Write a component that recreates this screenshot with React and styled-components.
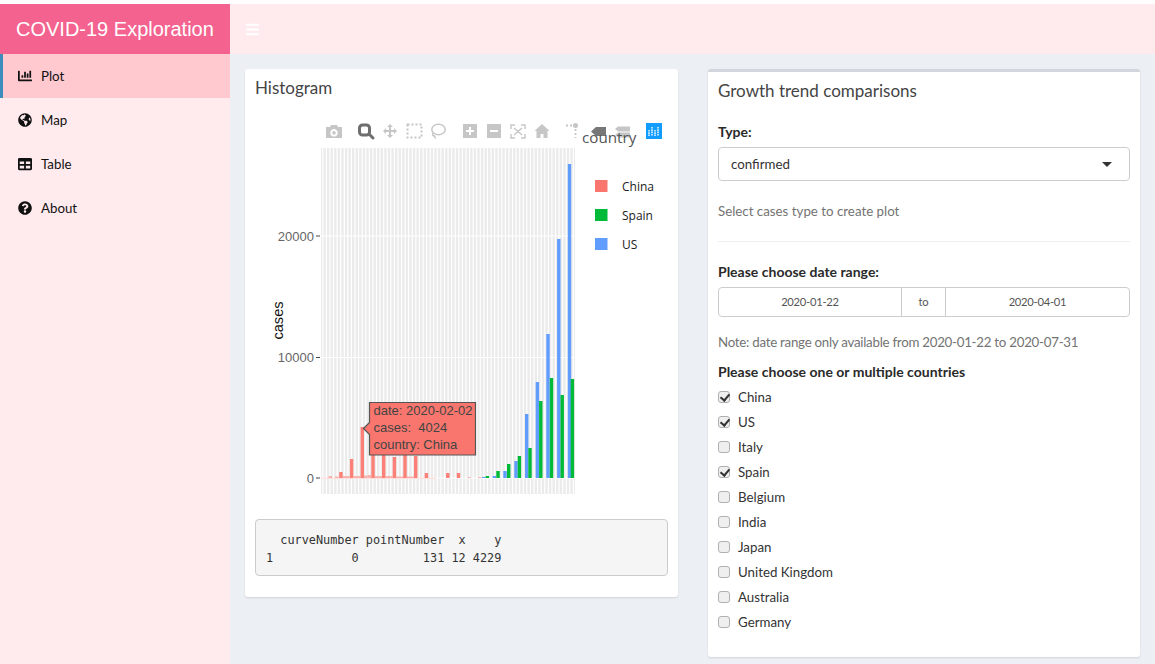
import React from 'react';
import styled, { createGlobalStyle } from 'styled-components';
import { FaBars, FaChartBar, FaGlobeAmericas, FaTable, FaQuestionCircle } from 'react-icons/fa';

const GlobalStyle = createGlobalStyle`
  html, body {
    margin: 0;
    height: 100%;
    overflow: hidden;
  }
  body {
    font-family: "Lato", "Liberation Sans", sans-serif;
    font-size: 13.3px;
    color: #333;
    background: #fdfdfd;
  }
  * {
    box-sizing: border-box;
  }
`;

const Page = styled.div`
  height: 664px;
  padding-top: 4px;
  display: flex;
  flex-direction: column;
`;

const Header = styled.header`
  display: flex;
  height: 50px;
  flex: none;
`;

const Logo = styled.div`
  width: 230px;
  background: #f4628f;
  color: #fff;
  font-family: "Liberation Sans", sans-serif;
  font-size: 20px;
  line-height: 50px;
  padding-left: 16px;
  white-space: nowrap;
`;

const Navbar = styled.nav`
  flex: 1;
  background: #ffeaed;
  color: #fff;
  display: flex;
  align-items: center;
  padding-left: 15px;
  font-size: 15px;
`;

const Body = styled.div`
  flex: 1;
  display: flex;
  min-height: 0;
`;

const Sidebar = styled.aside`
  width: 230px;
  background: #ffeaed;
  flex: none;
`;

const MenuItem = styled.div`
  height: 44px;
  display: flex;
  align-items: center;
  gap: 9px;
  padding-left: ${(p) => (p.$active ? '15px' : '18px')};
  background: ${(p) => (p.$active ? '#ffc9cf' : 'transparent')};
  border-left: ${(p) => (p.$active ? '3px solid #3c8dbc' : 'none')};
  color: #111;
  svg {
    width: 14px;
    height: 14px;
  }
`;

const Main = styled.main`
  flex: 1;
  background: #ecf0f5;
  padding: 15px;
  display: grid;
  grid-template-columns: 1fr 1fr;
  column-gap: 30px;
  align-items: start;
`;

const Card = styled.section`
  background: #fff;
  border-radius: 3px;
  border-top: ${(p) => (p.$topline ? '3px solid #d2d6de' : 'none')};
  box-shadow: 0 1px 2px rgba(0, 0, 0, 0.12);
`;

const CardTitle = styled.h3`
  margin: 0;
  padding: ${(p) => (p.$compact ? '9px 10px' : '9px 10px 12px')};
  font-size: 17px;
  line-height: 20px;
  font-weight: 400;
  color: #444;
`;

const HistBody = styled.div`
  padding: 0 10px 21px;
`;

const PlotSvg = styled.svg`
  display: block;
  width: 413px;
  height: 409px;
`;

const Pre = styled.pre`
  margin: 0;
  height: 57px;
  padding: 11px 10px;
  background: #f5f5f5;
  border: 1px solid #ccc;
  border-radius: 4px;
  font-family: "DejaVu Sans Mono", "Liberation Mono", monospace;
  font-size: 11.85px;
  line-height: 18px;
  color: #333;
`;

const FormBody = styled.div`
  padding: 2px 10px 23px;
`;

const Label = styled.div`
  font-size: 14px;
  font-weight: 700;
  line-height: 20px;
  color: #2a2a2a;
  margin-top: ${(p) => p.$top || 0}px;
  margin-bottom: ${(p) => p.$bottom || 0}px;
`;

const Select = styled.div`
  height: 34px;
  border: 1px solid #ccc;
  border-radius: 4px;
  display: flex;
  align-items: center;
  justify-content: space-between;
  padding: 0 17px 0 12px;
`;

const Caret = styled.span`
  width: 0;
  height: 0;
  border-left: 5px solid transparent;
  border-right: 5px solid transparent;
  border-top: 5px solid #333;
`;

const Help = styled.div`
  color: #737373;
  line-height: 20px;
  margin-top: ${(p) => p.$top}px;
  letter-spacing: ${(p) => (p.$tight ? '-0.26px' : 'normal')};
`;

const Rule = styled.hr`
  margin: 20px 0 0;
  border: 0;
  border-top: 1px solid #eee;
`;

const DateRange = styled.div`
  height: 30px;
  border: 1px solid #ccc;
  border-radius: 4px;
  display: grid;
  grid-template-columns: 182px 45px 1fr;
  font-size: 11.2px;
  letter-spacing: -0.25px;
  color: #555;
  text-align: center;
  line-height: 28px;
`;

const DateTo = styled.span`
  border-left: 1px solid #ccc;
  border-right: 1px solid #ccc;
`;

const CheckList = styled.div`
  margin-top: 2px;
`;

const CheckRow = styled.label`
  height: 25px;
  display: flex;
  align-items: center;
  gap: 8px;
`;

const CheckBox = styled.input`
  appearance: none;
  width: 12px;
  height: 12px;
  margin: 0;
  position: relative;
  border: 1px solid #b0b0b0;
  border-radius: 3px;
  background: #efefef;
  &:checked::after {
    content: '';
    position: absolute;
    left: 3px;
    top: 0;
    width: 4px;
    height: 7px;
    border-right: 2px solid #333;
    border-bottom: 2px solid #333;
    transform: rotate(40deg);
  }
`;

const menu = [
  ['Plot', FaChartBar],
  ['Map', FaGlobeAmericas],
  ['Table', FaTable],
  ['About', FaQuestionCircle],
];

const countries = [
  ['China', true],
  ['US', true],
  ['Italy', false],
  ['Spain', true],
  ['Belgium', false],
  ['India', false],
  ['Japan', false],
  ['United Kingdom', false],
  ['Australia', false],
  ['Germany', false],
];

// plot geometry, in page pixels (the svg viewBox is the page itself)
const STRIPE = 3.58;
const BASE = 478;
const china = [
  [340.9, 472], [351.6, 459], [362.3, 427], [373, 440], [383.7, 440],
  [394.4, 457], [405, 440], [415.7, 456], [426.4, 473], [447.8, 473], [458.5, 473],
];
const chinaSmall = [
  [330.2, 476], [336.8, 476.5], [344.4, 476], [347.8, 476], [355.2, 476], [358.8, 476],
  [365.8, 475.5], [369.4, 475], [376.6, 476], [380.2, 476], [387.3, 476], [390.8, 476],
  [398, 476.5], [401.6, 476.5], [408.7, 476.5], [412.2, 476.5], [469.2, 477], [479.9, 477],
];
const us = [
  [483.7, 477], [494.4, 476], [505, 471], [516, 461], [526.7, 414],
  [537.4, 382], [548, 334], [558.8, 239], [569.5, 164],
];
const spain = [
  [487.3, 476], [498, 471], [508.7, 464], [519.4, 456], [530, 448],
  [540.8, 401], [551.5, 378], [562.2, 395], [572.4, 379],
];
const stripes = Array.from({ length: 71 }, (_, i) => 321 + (i + 0.5) * STRIPE);

const Bars = ({ data, color, faded }) =>
  data.map(([x, top]) => (
    <rect
      key={x}
      x={x - 1.7}
      y={top}
      width={3.4}
      height={BASE - top}
      fill={color}
      opacity={faded ? 0.55 : 1}
    />
  ));

const ICON = '#c6c6c6';
const ACTIVE = '#6e6e6e';

const ModeBar = () => (
  <g fill={ICON}>
    {/* camera */}
    <path
      fillRule="evenodd"
      d="M326 127h4l1-2h6l1 2h4v11h-16zM334 129a3.8 3.8 0 1 0 .01 0zM334 131a1.8 1.8 0 1 1-.01 0z"
    />
    {/* zoom */}
    <rect x="359.5" y="125" width="10" height="10" rx="3" fill="none" stroke={ACTIVE} strokeWidth="3" />
    <path d="M369 134l4 4" stroke={ACTIVE} strokeWidth="3" strokeLinecap="round" />
    {/* pan */}
    <path d="M390 124l3 3h-2v3h3v-2l3 3-3 3v-2h-3v3h2l-3 3-3-3h2v-3h-3v2l-3-3 3-3v2h3v-3h-2z" />
    {/* box select */}
    <rect x="407.5" y="124.5" width="14" height="13" fill="none" stroke={ICON} strokeWidth="2" strokeDasharray="2 2" />
    {/* lasso */}
    <ellipse cx="438.500" cy="129.500" rx="6.700" ry="5.300" fill="none" stroke={ICON} strokeWidth="1.500" />
    <path d="M433 133c-1 2 0 3 1.500 3l1 2.500" fill="none" stroke={ICON} strokeWidth="1.500" />
    {/* zoom in */}
    <path fillRule="evenodd" d="M463 124h14v14h-14zM469 127v3h-3v2h3v3h2v-3h3v-2h-3v-3z" />
    {/* zoom out */}
    <path fillRule="evenodd" d="M487 124h14v14h-14zM490 130v2h8v-2z" />
    {/* autoscale */}
    <path
      d="M511 129v-4h4M521 125h4v4M525 134v4h-4M515 138h-4v-4M514 128l8 7M522 128l-8 7"
      fill="none"
      stroke={ICON}
      strokeWidth="1.400"
    />
    {/* home */}
    <path d="M542 124l7.500 7h-2v7h-4v-4h-3v4h-4v-7h-2z" />
    {/* spike lines */}
    <circle cx="575.500" cy="125.500" r="2.500" />
    <path d="M566 125.500h7M575.500 129v9" fill="none" stroke={ICON} strokeWidth="1.800" strokeDasharray="2 2" />
    {/* hover closest */}
    <path d="M591 131.500l5-4.500h10v9h-10z" fill="#777" />
    {/* hover compare */}
    <path d="M615 129l3-2.500h12v5h-12zM615 135l3-2.500h12v5h-12z" />
    {/* plotly logo */}
    <rect x="646" y="123" width="16" height="16" fill="#119dff" />
    <path d="M649 130v6M652 127v9M655 130v6M658 127v9" stroke="#fff" strokeWidth="1.400" strokeDasharray="1.600 0.700" />
  </g>
);

const Plot = () => (
  <PlotSvg viewBox="255 110 413 409">
    <rect x="321" y="148" width="254" height="346" fill="#ebebeb" />
    {stripes.map((x) => (
      <line key={x} x1={x} x2={x} y1="148" y2="494" stroke="#fff" strokeWidth="1.200" />
    ))}
    {[236, 357.500, 478].map((y) => (
      <line key={y} x1="321" x2="575" y1={y} y2={y} stroke="#fff" strokeWidth="1.200" />
    ))}
    <rect x="321" y="477.500" width="115" height="1.500" fill="#ffe0dd" />
    <Bars data={chinaSmall} color="#fb8078" faded />
    <Bars data={china} color="#fb8078" />
    <Bars data={us} color="#619cff" />
    <Bars data={spain} color="#00ba38" />

    {[['20000', 236], ['10000', 357.500], ['0', 478]].map(([label, y]) => (
      <g key={label}>
        <text x="314" y={y + 4.500} textAnchor="end" fontFamily="Liberation Sans" fontSize="13" fill="#666">
          {label}
        </text>
        <line x1="316" x2="320" y1={y} y2={y} stroke="#444" strokeWidth="1" />
      </g>
    ))}
    <text
      transform="translate(282.500 320.500) rotate(-90)"
      textAnchor="middle"
      fontFamily="Liberation Sans"
      fontSize="14.600"
      fill="#111"
    >
      cases
    </text>

    <ModeBar />

    <text x="582" y="143" fontFamily="Open Sans" fontSize="15.200" fill="#555">
      country
    </text>
    {[['China', 180, '#f8766d'], ['Spain', 209, '#00ba38'], ['US', 238, '#619cff']].map(([name, y, color]) => (
      <g key={name}>
        <rect x="595" y={y} width="12.500" height="12" fill={color} />
        <text x="622" y={y + 11} fontFamily="Open Sans" fontSize="12" fill="#222">
          {name}
        </text>
      </g>
    ))}

    {/* hover label */}
    <path
      d="M369.500 402.500h106v52.500h-106v-20.500l-6-6 6-6z"
      fill="#f8766d"
      stroke="#555"
      strokeWidth="1.200"
    />
    <g fontFamily="Liberation Sans" fontSize="13" fill="#444">
      <text x="373.500" y="414.500">date: 2020-02-02</text>
      <text x="373.500" y="431.500" xmlSpace="preserve">cases:  4024</text>
      <text x="373.500" y="449">country: China</text>
    </g>
  </PlotSvg>
);

export default function App() {
  return (
    <Page>
      <GlobalStyle />
      <Header>
        <Logo>COVID-19 Exploration</Logo>
        <Navbar>
          <FaBars />
        </Navbar>
      </Header>
      <Body>
        <Sidebar>
          {menu.map(([name, Icon], index) => (
            <MenuItem key={name} $active={index === 0}>
              <Icon />
              {name}
            </MenuItem>
          ))}
        </Sidebar>
        <Main>
          <Card>
            <CardTitle>Histogram</CardTitle>
            <HistBody>
              <Plot />
              <Pre>{'  curveNumber pointNumber  x    y\n1           0         131 12 4229'}</Pre>
            </HistBody>
          </Card>
          <Card $topline>
            <CardTitle $compact>Growth trend comparisons</CardTitle>
            <FormBody>
              <Label $top={10} $bottom={5}>Type:</Label>
              <Select>
                confirmed
                <Caret />
              </Select>
              <Help $top={20}>Select cases type to create plot</Help>
              <Rule />
              <Label $top={20} $bottom={5}>Please choose date range:</Label>
              <DateRange>
                <span>2020-01-22</span>
                <DateTo>to</DateTo>
                <span>2020-04-01</span>
              </DateRange>
              <Help $top={15} $tight>Note: date range only available from 2020-01-22 to 2020-07-31</Help>
              <Label $top={10}>Please choose one or multiple countries</Label>
              <CheckList>
                {countries.map(([name, checked]) => (
                  <CheckRow key={name}>
                    <CheckBox type="checkbox" defaultChecked={checked} />
                    {name}
                  </CheckRow>
                ))}
              </CheckList>
            </FormBody>
          </Card>
        </Main>
      </Body>
    </Page>
  );
}
